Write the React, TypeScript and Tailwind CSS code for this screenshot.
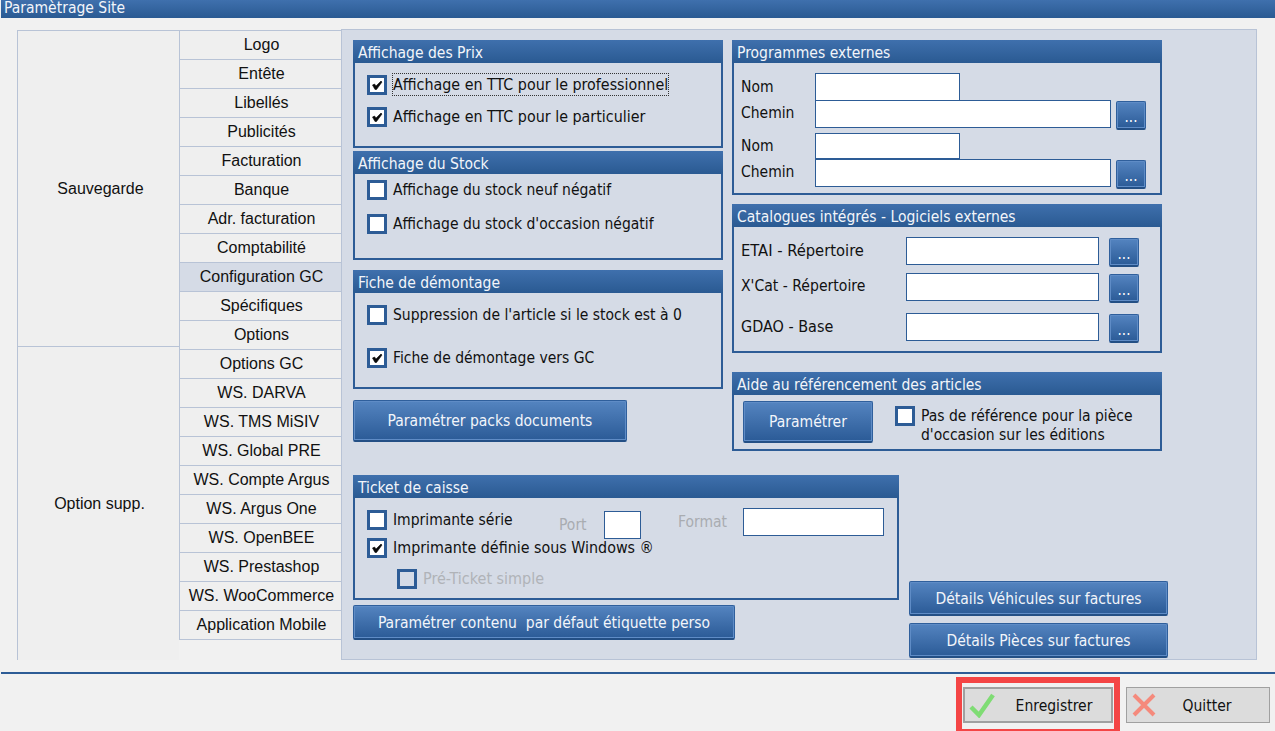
const tabs1 = ["Logo", "Entête", "Libellés", "Publicités", "Facturation", "Banque", "Adr. facturation", "Comptabilité", "Configuration GC", "Spécifiques", "Options"];
const tabs2 = ["Options GC", "WS. DARVA", "WS. TMS MiSIV", "WS. Global PRE", "WS. Compte Argus", "WS. Argus One", "WS. OpenBEE", "WS. Prestashop", "WS. WooCommerce", "Application Mobile"];

const panelFont = "font-['DejaVu_Sans_Condensed','DejaVu_Sans',sans-serif] text-[15.5px]";

function Group({ title, className, children }: { title: string; className: string; children: React.ReactNode }) {
    return (
        <div className={`shrink-0 border-[2px] border-t-0 border-[#2d5c96] flex flex-col ${className}`}>
            <div className="h-[23px] -mx-[2px] shrink-0 pl-[5px] pt-[2px] leading-[22px] text-[#f2f5fa] bg-gradient-to-b from-[#3f70ad] to-[#2a5a92]">{title}</div>
            <div className="relative flex-1">{children}</div>
        </div>
    );
}

function Check({ checked, disabled, label, focus, className }: { checked?: boolean; disabled?: boolean; label: string; focus?: boolean; className?: string }) {
    return (
        <div className={`flex items-center ${className ?? ""}`}>
            <div className={`w-[20px] h-[20px] shrink-0 border-[3px] border-[#2d5c96] flex items-center justify-center ${disabled ? "" : "bg-white"}`}>
                {checked && (
                    <svg width="12" height="12" viewBox="0 0 12 12">
                        <path d="M1.5 6 L3.5 5 L5 7 L10 2 L11 3 L5.5 10.5 L4 10.5 Z" fill="#0a0a0a" stroke="#0a0a0a" strokeWidth="0.6" />
                    </svg>
                )}
            </div>
            <span className={`ml-[6px] pt-[1px] leading-[20px] ${disabled ? "text-[#b0b3b8]" : "text-[#111]"} ${focus ? "outline-dotted outline-1 outline-[#333]" : ""}`}>{label}</span>
        </div>
    );
}

function BlueButton({ label, className }: { label: string; className: string }) {
    return (
        <button className={`shrink-0 flex items-center justify-center rounded-[2px] border border-[#2f5f9c] border-b-[2px] border-b-[#234f85] shadow-[inset_0_0_0_1px_#5f8cc6] text-[#f2f5fa] bg-gradient-to-b from-[#5484c0] to-[#2b5b97] ${className}`}>
            {label}
        </button>
    );
}

function Field({ className }: { className: string }) {
    return <div className={`bg-white border border-[#2d5c96] shrink-0 ${className}`}></div>;
}

function Dots({ className }: { className?: string }) {
    return <BlueButton label="..." className={`w-[30px] h-[29px] pt-[4px] text-[15px] text-white self-start mt-[1px] ${className ?? ""}`} />;
}

function Tab({ label }: { label: string }) {
    return (
        <div className={`h-[29px] box-border border-b border-[#b8c3d6] text-center pl-[2px] leading-[28px] ${label === "Configuration GC" ? "bg-[#d5dbe6]" : ""}`}>{label}</div>
    );
}

export default function App() {
    return (
        <div className="w-[1275px] h-[731px] overflow-hidden bg-[#f1f1f1] flex flex-col font-['Liberation_Sans',sans-serif] text-[16px] text-[#111]">
            <div className={`h-[18px] ml-[1px] shrink-0 pl-[3px] leading-[17px] text-[#f2f5fa] bg-gradient-to-b from-[#3f70ad] to-[#2a5a92] ${panelFont}`}>Paramètrage Site</div>

            <div className="h-[630px] mt-[12px] ml-[17px] w-[1240px] flex shrink-0">
                {/* groupes */}
                <div className="w-[162px] shrink-0 bg-[#efefef] border-l border-[#b8c3d6] flex flex-col">
                    <div className="h-[316px] border-t border-[#b8c3d6] flex items-center justify-center pl-[4px]">Sauvegarde</div>
                    <div className="flex-1 border-t border-[#b8c3d6] flex items-center justify-center pl-[2px]">Option supp.</div>
                </div>

                {/* onglets */}
                <div className="w-[162px] shrink-0 self-start bg-[#efefef] border-l border-t border-[#b8c3d6]">
                    {tabs1.map((t) => <Tab key={t} label={t} />)}
                    {tabs2.map((t) => <Tab key={t} label={t} />)}
                </div>

                {/* panneau principal */}
                <div className={`flex-1 h-[631px] -mt-[1px] border border-[#b8c3d6] bg-[#d5dbe6] pl-[11px] pt-[10px] ${panelFont}`}>
                    <div className="flex gap-[9px] h-[402px]">
                        <div className="w-[370px] flex flex-col">
                            <Group title="Affichage des Prix" className="h-[108px]">
                                <Check checked focus label="Affichage en TTC pour le professionnel" className="pl-[12px] pt-[11px] text-[15.9px]" />
                                <Check checked label="Affichage en TTC pour le particulier" className="pl-[12px] pt-[11px] text-[15.9px]" />
                            </Group>
                            <Group title="Affichage du Stock" className="h-[109px] mt-[3px]">
                                <Check label="Affichage du stock neuf négatif" className="pl-[12px] pt-[5px]" />
                                <Check label="Affichage du stock d'occasion négatif" className="pl-[12px] pt-[13px]" />
                            </Group>
                            <Group title="Fiche de démontage" className="h-[119px] mt-[10px]">
                                <Check label="Suppression de l'article si le stock est à 0" className="pl-[12px] pt-[11px]" />
                                <Check checked label="Fiche de démontage vers GC" className="pl-[12px] pt-[22px]" />
                            </Group>
                            <BlueButton label="Paramétrer packs documents" className="w-[274px] h-[42px] mt-[11px] pt-[3px]" />
                        </div>
                        <div className="w-[430px] flex flex-col">
                            <Group title="Programmes externes" className="h-[155px]">
                                <div className="pl-[7px] pt-[10px] flex flex-col">
                                    <div className="flex items-center h-[28px]">
                                        <span className="w-[74px] pt-[1px]">Nom</span>
                                        <Field className="w-[145px] h-[28px]" />
                                    </div>
                                    <div className="flex items-center h-[28px] -mt-[1px]">
                                        <span className="w-[74px]">Chemin</span>
                                        <Field className="w-[296px] h-[28px]" />
                                        <Dots className="ml-[5px]" />
                                    </div>
                                    <div className="flex items-center h-[26px] mt-[5px]">
                                        <span className="w-[74px] pt-[1px]">Nom</span>
                                        <Field className="w-[145px] h-[26px]" />
                                    </div>
                                    <div className="flex items-center h-[28px]">
                                        <span className="w-[74px] -mt-[1px]">Chemin</span>
                                        <Field className="w-[296px] h-[28px]" />
                                        <Dots className="ml-[5px]" />
                                    </div>
                                </div>
                            </Group>
                            <Group title="Catalogues intégrés - Logiciels externes" className="h-[149px] mt-[9px]">
                                <div className="pl-[7px] pt-[10px] flex flex-col text-[15.9px]">
                                    <div className="flex items-center h-[28px]">
                                        <span className="w-[165px] text-[16.4px]">ETAI - Répertoire</span>
                                        <Field className="w-[193px] h-[28px]" />
                                        <Dots className="ml-[10px]" />
                                    </div>
                                    <div className="flex items-center h-[28px] mt-[8px]">
                                        <span className="w-[165px] text-[15.6px]">X'Cat - Répertoire</span>
                                        <Field className="w-[193px] h-[28px]" />
                                        <Dots className="ml-[10px]" />
                                    </div>
                                    <div className="flex items-center h-[28px] mt-[12px]">
                                        <span className="w-[165px] text-[16px]">GDAO - Base</span>
                                        <Field className="w-[193px] h-[28px]" />
                                        <Dots className="ml-[10px]" />
                                    </div>
                                </div>
                            </Group>
                            <Group title="Aide au référencement des articles" className="h-[79px] mt-[19px]">
                                <div className="flex pl-[9px] pt-[6px]">
                                    <BlueButton label="Paramétrer" className="w-[130px] h-[42px] pt-[3px]" />
                                    <div className="ml-[22px] pt-[4px]">
                                        <Check label="Pas de référence pour la pièce" />
                                        <div className="pl-[26px] leading-[20px] -mt-[1px]">d'occasion sur les éditions</div>
                                    </div>
                                </div>
                            </Group>
                        </div>
                    </div>

                    <div className="flex mt-[33px]">
                        <div className="w-[546px] shrink-0 flex flex-col">
                            <Group title="Ticket de caisse" className="h-[125px]">
                                <Check label="Imprimante série" className="absolute left-[12px] top-[11px]" />
                                <span className="absolute left-[204px] top-[17px] leading-[20px] text-[#a9acb1]">Port</span>
                                <Field className="absolute left-[249px] top-[13px] w-[37px] h-[28px]" />
                                <span className="absolute left-[323px] top-[14px] leading-[20px] text-[#a9acb1]">Format</span>
                                <Field className="absolute left-[388px] top-[10px] w-[141px] h-[28px]" />
                                <Check checked label="Imprimante définie sous Windows ®" className="absolute left-[12px] top-[39px] text-[15.9px]" />
                                <Check disabled label="Pré-Ticket simple" className="absolute left-[42px] top-[70px] text-[16px]" />
                            </Group>
                            <BlueButton label="Paramétrer contenu  par défaut étiquette perso" className="w-[382px] h-[35px] mt-[5px] pt-[3px] whitespace-pre" />
                        </div>
                        <div className="ml-[10px] pt-[106px] flex flex-col gap-[7px]">
                            <BlueButton label="Détails Véhicules sur factures" className="w-[259px] h-[35px] pt-[3px]" />
                            <BlueButton label="Détails Pièces sur factures" className="w-[259px] h-[35px] pt-[3px]" />
                        </div>
                    </div>
                </div>
            </div>

            <div className="ml-[1px] h-[2px] bg-[#2d5c96] shrink-0 mt-[12px]"></div>

            <div className={`flex justify-end items-start pr-[5px] mt-[3px] ${panelFont}`}>
                <div className="border-[6px] border-[#f44545] px-[1px] pt-[4px] pb-[2px] h-[58px]">
                    <button className="relative w-[150px] h-[36px] bg-[#dcdcdc] border-2 border-[#a0a0a0] pl-[32px] pt-[3px]">
                        Enregistrer
                        <svg className="absolute left-[4px] top-[3px]" width="26" height="26" viewBox="0 0 26 26">
                            <path d="M2 15 L10 23 L24 3" fill="none" stroke="#7fdc74" strokeWidth="4.5" />
                        </svg>
                    </button>
                </div>
                <button className="relative w-[144px] h-[36px] mt-[10px] ml-[6px] bg-[#dcdcdc] border border-[#a0a0a0] pl-[18px] pt-[3px]">
                    Quitter
                    <svg className="absolute left-[4px] top-[4px]" width="26" height="26" viewBox="0 0 26 26">
                        <path d="M3 3 L23 23 M23 3 L3 23" fill="none" stroke="#f58a7c" strokeWidth="4" />
                    </svg>
                </button>
            </div>
        </div>
    );
}
